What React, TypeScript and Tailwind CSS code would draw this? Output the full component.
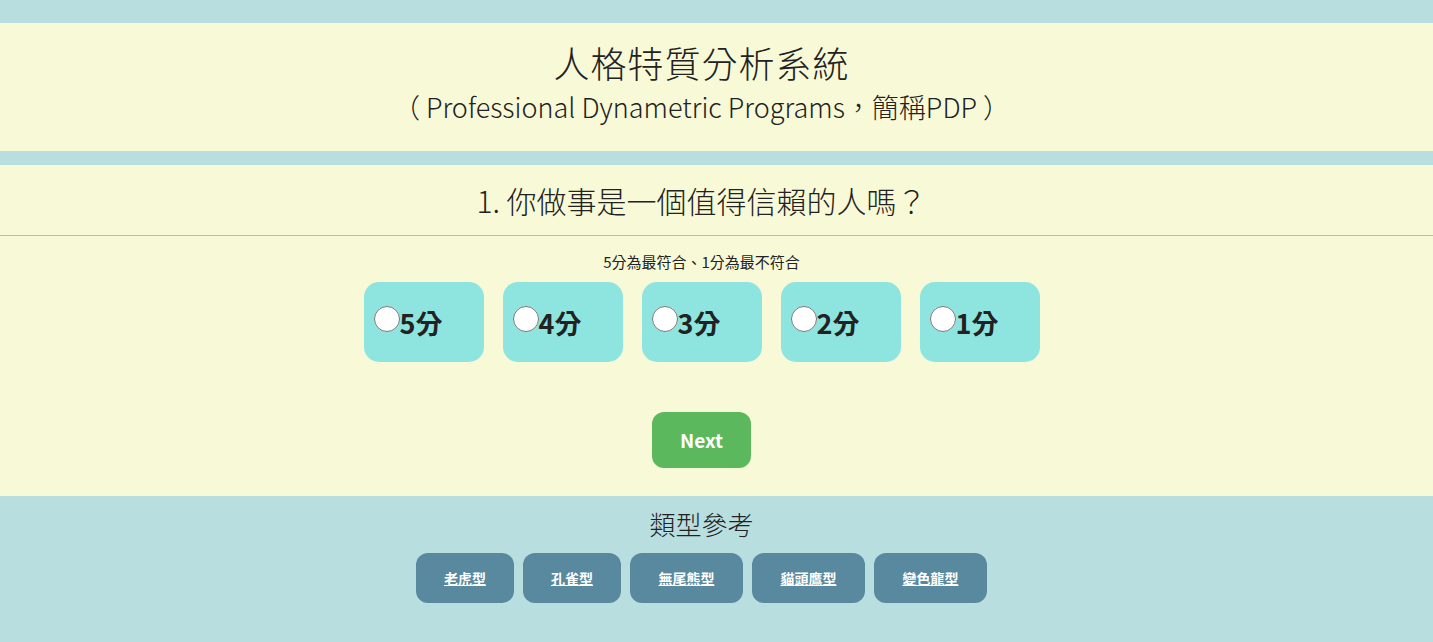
import { useState } from "react";

const scores = [5, 4, 3, 2, 1];
const types = ["老虎型", "孔雀型", "無尾熊型", "貓頭鷹型", "變色龍型"];

export default function App() {
  const [picked, setPicked] = useState<number | null>(null);

  return (
    <div
      className="min-h-[642px] bg-[#b9dee0] pt-[23px] text-[#222]"
      style={{ fontFamily: '"Microsoft JhengHei", "Noto Sans CJK TC", "Noto Sans", sans-serif' }}
    >
      {/* Header */}
      <header className="flex h-[128px] flex-col items-center bg-[#f8f9d7] pr-[30px] pt-[15px]">
        <h1 className="text-[36px] font-light leading-[48px] tracking-[1px]">人格特質分析系統</h1>
        <p className="mt-[3px] text-[27px] font-light leading-[36px]">
          （ Professional Dynametric Programs，簡稱PDP ）
        </p>
      </header>

      {/* Question */}
      <main className="mt-[14px] bg-[#f8f9d7]">
        <h2 className="flex h-[71px] items-center justify-center border-b border-[#bdbda6] pr-[30px] text-[30px] font-light">
          1. 你做事是一個值得信賴的人嗎？
        </h2>
        <p className="pr-[30px] pt-[17px] text-center text-[15px] leading-[18px]">5分為最符合、1分為最不符合</p>
        <div className="mt-[11px] flex justify-center gap-[19px] pr-[30px]">
          {scores.map((s) => (
            <label
              key={s}
              className="flex h-[80px] w-[120px] cursor-pointer items-center rounded-[15px] bg-[#8ee5e0] pl-[10px]"
            >
              <input
                type="radio"
                name="score"
                checked={picked === s}
                onChange={() => setPicked(s)}
                className="m-0 mb-[6px] h-[26px] w-[26px] cursor-pointer"
              />
              <span className="text-[27px] font-bold leading-none">{s}分</span>
            </label>
          ))}
        </div>
        <div className="flex justify-center pb-[28px] pr-[30px] pt-[50px]">
          <button
            type="button"
            className="h-[56px] w-[99px] rounded-[12px] bg-[#5cb85c] text-[19px] font-bold text-white"
          >
            Next
          </button>
        </div>
      </main>

      {/* Types */}
      <footer className="flex flex-col items-center pr-[30px] pt-[12px]">
        <h3 className="text-[26px] font-light leading-[32px]">類型參考</h3>
        <div className="mt-[13px] flex gap-[9px]">
          {types.map((t) => (
            <a
              key={t}
              href="#"
              className={`flex h-[50px] items-center justify-center rounded-[12px] bg-[#58899f] text-[14px] font-bold text-white underline ${
                t.length > 3 ? "w-[113px]" : "w-[98px]"
              }`}
            >
              {t}
            </a>
          ))}
        </div>
      </footer>
    </div>
  );
}
